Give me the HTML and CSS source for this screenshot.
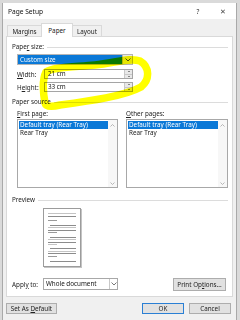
FILE: index.html
```html
<!DOCTYPE html>
<html>
<head>
<meta charset="utf-8">
<title>Page Setup</title>
<link rel="stylesheet" href="styles.css">
</head>
<body>
<div class="screen">
  <div class="dialog">
    <div class="titlebar">
      <span class="title">Page Setup</span>
      <span class="help">?</span>
      <span class="close">&#x2715;</span>
    </div>
    <div class="tabs">
      <div class="tab tab-margins">Margins</div>
      <div class="tab tab-paper active">Paper</div>
      <div class="tab tab-layout">Layout</div>
    </div>
    <div class="panel">
      <div class="group"><span class="group-label">Pape<u>r</u> size:</span><span class="rule"></span></div>
      <div class="combo">
        <span class="combo-value">Custom size</span>
        <span class="combo-btn"><svg width="6" height="4" viewBox="0 0 6 4"><polyline points="0.5,0.5 3,3 5.5,0.5" fill="none" stroke="#444" stroke-width="0.9"/></svg></span>
      </div>
      <div class="field-row">
        <span class="field-label"><u>W</u>idth:</span>
        <div class="spin">
          <span class="spin-text">21 cm</span>
          <span class="spin-btns"><span class="up"></span><span class="down"></span></span>
        </div>
      </div>
      <div class="field-row field-row-2">
        <span class="field-label">H<u>e</u>ight:</span>
        <div class="spin">
          <span class="spin-text">33 cm</span>
          <span class="spin-btns"><span class="up"></span><span class="down"></span></span>
        </div>
      </div>

      <div class="group group-source"><span class="group-label">Paper source</span><span class="rule"></span></div>
      <div class="sources">
        <div class="source-col source-left">
          <div class="list-label"><u>F</u>irst page:</div>
          <div class="listbox">
            <div class="items">
              <div class="item selected">Default tray (Rear Tray)</div>
              <div class="item">Rear Tray</div>
            </div>
            <div class="scrollbar">
              <svg width="5" height="3" viewBox="0 0 5 3"><polyline points="0.5,2.5 2.5,0.5 4.5,2.5" fill="none" stroke="#a6a6a6" stroke-width="0.8"/></svg>
              <svg width="5" height="3" viewBox="0 0 5 3"><polyline points="0.5,0.5 2.5,2.5 4.5,0.5" fill="none" stroke="#a6a6a6" stroke-width="0.8"/></svg>
            </div>
          </div>
        </div>
        <div class="source-col source-right">
          <div class="list-label"><u>O</u>ther pages:</div>
          <div class="listbox">
            <div class="items">
              <div class="item selected">Default tray (Rear Tray)</div>
              <div class="item">Rear Tray</div>
            </div>
            <div class="scrollbar">
              <svg width="5" height="3" viewBox="0 0 5 3"><polyline points="0.5,2.5 2.5,0.5 4.5,2.5" fill="none" stroke="#a6a6a6" stroke-width="0.8"/></svg>
              <svg width="5" height="3" viewBox="0 0 5 3"><polyline points="0.5,0.5 2.5,2.5 4.5,0.5" fill="none" stroke="#a6a6a6" stroke-width="0.8"/></svg>
            </div>
          </div>
        </div>
      </div>

      <div class="group group-preview"><span class="group-label">Preview</span><span class="rule"></span></div>
      <div class="thumb">
        <svg width="36" height="57" viewBox="0 0 36 57">
          <g stroke-width="1">
            <line x1="4" y1="4.5" x2="32" y2="4.5" stroke="#c4c4c4"/>
            <line x1="4" y1="7.5" x2="32" y2="7.5" stroke="#8c8c8c"/>
            <line x1="4" y1="11.5" x2="13" y2="11.5" stroke="#9a9a9a"/>
            <line x1="6" y1="16.5" x2="32" y2="16.5" stroke="#8c8c8c"/>
            <line x1="4" y1="18.5" x2="32" y2="18.5" stroke="#c4c4c4"/>
            <line x1="4" y1="21.5" x2="32" y2="21.5" stroke="#8c8c8c"/>
            <line x1="4" y1="23.5" x2="13" y2="23.5" stroke="#9a9a9a"/>
            <line x1="6" y1="28.5" x2="32" y2="28.5" stroke="#8c8c8c"/>
            <line x1="4" y1="30.5" x2="32" y2="30.5" stroke="#c4c4c4"/>
            <line x1="4" y1="33.5" x2="32" y2="33.5" stroke="#8c8c8c"/>
            <line x1="4" y1="35.5" x2="13" y2="35.5" stroke="#c4c4c4"/>
            <line x1="6" y1="39.5" x2="32" y2="39.5" stroke="#8c8c8c"/>
            <line x1="4" y1="42.5" x2="32" y2="42.5" stroke="#c4c4c4"/>
            <line x1="4" y1="44.5" x2="32" y2="44.5" stroke="#8c8c8c"/>
            <line x1="4" y1="47.5" x2="13" y2="47.5" stroke="#9a9a9a"/>
            <line x1="6" y1="52.5" x2="32" y2="52.5" stroke="#8c8c8c"/>
          </g>
        </svg>
      </div>

      <div class="apply-row">
        <span class="apply-label">Appl<u>y</u> to:</span>
        <div class="select">
          <span class="select-text">Whole document</span>
          <span class="select-btn"><svg width="6" height="4" viewBox="0 0 6 4"><polyline points="0.5,0.5 3,3 5.5,0.5" fill="none" stroke="#555" stroke-width="0.8"/></svg></span>
        </div>
        <button class="btn btn-print">Print Op<u>t</u>ions...</button>
      </div>
    </div>

    <div class="footer">
      <button class="btn btn-default">Set As <u>D</u>efault</button>
      <button class="btn btn-ok">OK</button>
      <button class="btn btn-cancel">Cancel</button>
    </div>
  </div>
</div>

<svg class="scribble" width="240" height="320" viewBox="0 0 240 320">
  <path d="M 45 103 C 43 92, 42 80, 46 72 C 52 67, 75 67, 95 65 C 115 63, 130 57, 140 61 C 150 67, 150 80, 141 87 C 125 96, 90 101, 60 105 C 52 107, 46 107, 45 103 Z" fill="none" stroke="#ffff00" stroke-width="7.5" stroke-linecap="round" stroke-linejoin="round"/>
</svg>
</body>
</html>
```

FILE: styles.css
```css
* { box-sizing: border-box; }

html, body {
  margin: 0;
  padding: 0;
}

body {
  width: 240px;
  height: 320px;
  overflow: hidden;
  position: relative;
  background: #d8d8d8;
  font-family: "Noto Sans", "Liberation Sans", sans-serif;
  font-size: 6.3px;
  color: #151515;
}

u { text-decoration: underline; text-decoration-thickness: 0.5px; text-underline-offset: 1px; }

.screen {
  display: flex;
  height: 320px;
  padding: 3px 0 0 2px;
  background: #dadada;
}

.dialog {
  width: 235px;
  height: 317px;
  background: #f0f0f0;
  border-left: 1px solid #a9a9a9;
  border-right: 1px solid #a9a9a9;
}

/* title bar */
.titlebar {
  height: 16px;
  background: #ffffff;
  display: flex;
  align-items: center;
  padding-left: 5px;
}
.title { font-size: 6.6px; color: #111; }
.help {
  margin-left: auto;
  width: 10px;
  margin-right: 13px;
  text-align: center;
  font-size: 6.5px;
  color: #333;
}
.close {
  width: 14px;
  margin-right: 6px;
  text-align: center;
  font-size: 6.5px;
  color: #444;
}

/* tabs */
.tabs {
  display: flex;
  align-items: flex-end;
  height: 13px;
  margin-top: 4px;
  padding-left: 4px;
}
.tab {
  height: 11px;
  border: 1px solid #d9d9d9;
  border-bottom: none;
  background: #f0f0f0;
  display: flex;
  align-items: center;
  justify-content: center;
  color: #222;
}
.tab-margins { width: 34px; border-right: none; }
.tab-paper { width: 32px; }
.tab-layout { width: 29px; border-left: none; }
.tab.active {
  height: 14px;
  margin-bottom: -1px;
  background: #ffffff;
  position: relative;
  z-index: 1;
  padding-bottom: 1px;
}

/* panel */
.panel {
  margin-left: 3px;
  width: 227px;
  height: 261px;
  background: #ffffff;
  border: 1px solid #d9d9d9;
  padding: 0 4px 0 5px;
}

.group {
  display: flex;
  align-items: center;
  height: 8px;
  line-height: 8px;
  margin-top: 6px;
  color: #222;
}
.group-label { white-space: nowrap; }
.rule {
  flex: 1;
  height: 1px;
  background: #dcdcdc;
  margin-left: 3px;
}

.combo {
  margin: 3px 0 0 5px;
  width: 116px;
  height: 11px;
  border: 1px solid #b5b5b5;
  display: flex;
}
.combo-value {
  flex: 1;
  background: #0a78d7;
  color: #ffffff;
  padding-left: 2px;
  line-height: 9px;
}
.combo-btn {
  width: 10px;
  background: #e6e6e6;
  border-left: 1px solid #b5b5b5;
  display: flex;
  align-items: center;
  justify-content: center;
}

.field-row {
  display: flex;
  align-items: center;
  margin-top: 4px;
  height: 10px;
}
.field-row-2 { margin-top: 3px; }
.field-label {
  width: 32px;
  padding-left: 5px;
  color: #222;
}
.spin {
  width: 89px;
  height: 10px;
  border: 1px solid #a5a5a5;
  display: flex;
}
.spin-text {
  flex: 1;
  padding-left: 3px;
  line-height: 8px;
}
.spin-btns {
  width: 8px;
  display: flex;
  flex-direction: column;
  background: #e8e8e8;
  border-left: 1px solid #c8c8c8;
}
.spin-btns span {
  flex: 1;
  display: flex;
  align-items: center;
  justify-content: center;
}
.spin-btns .up { border-bottom: 1px solid #c8c8c8; }
.spin-btns .up::before {
  content: "";
  border-left: 1.5px solid transparent;
  border-right: 1.5px solid transparent;
  border-bottom: 1.5px solid #222;
}
.spin-btns .down::before {
  content: "";
  border-left: 1.5px solid transparent;
  border-right: 1.5px solid transparent;
  border-top: 1.5px solid #222;
}

/* paper source */
.sources {
  display: flex;
  gap: 8px;
  margin-top: 4px;
  padding-left: 5px;
}
.source-left { width: 101px; }
.source-right { width: 102px; }
.list-label {
  height: 8px;
  line-height: 8px;
  color: #222;
}
.listbox {
  margin-top: 1px;
  height: 69px;
  border: 1px solid #a8a8a8;
  display: flex;
}
.items {
  flex: 1;
  padding: 1px 0 0 1px;
}
.item {
  height: 8px;
  line-height: 8px;
  padding-left: 1px;
  white-space: nowrap;
  color: #222;
}
.item.selected {
  background: #0a78d7;
  color: #ffffff;
}
.scrollbar {
  width: 9px;
  background: #f7f7f7;
  display: flex;
  flex-direction: column;
  justify-content: space-between;
  align-items: center;
  padding: 4px 0 2px;
}

/* preview */
.group-preview { margin-top: 8px; }
.thumb {
  margin: 4px 0 0 31px;
  width: 38px;
  height: 59px;
  background: #ffffff;
  border: 1px solid #9c9c9c;
  box-shadow: 1px 1px 0 #c4c4c4;
}
.thumb svg { display: block; }

/* apply row */
.apply-row {
  display: flex;
  align-items: center;
  height: 14px;
  margin-top: 10px;
  margin-right: 2px;
}
.apply-label {
  width: 31px;
  color: #222;
}
.select {
  width: 75px;
  height: 12px;
  border: 1px solid #a8a8a8;
  display: flex;
}
.select-text {
  flex: 1;
  padding-left: 2px;
  line-height: 10px;
}
.select-btn {
  width: 8px;
  border-left: 1px solid #c8c8c8;
  display: flex;
  align-items: center;
  justify-content: center;
}

.btn {
  font-family: inherit;
  font-size: 6.3px;
  color: #222;
  background: #e1e1e1;
  border: 1px solid #adadad;
  padding: 0;
  margin: 0;
  height: 11px;
  line-height: 9px;
  text-align: center;
}
.btn-print {
  margin-left: auto;
  width: 53px;
  height: 13px;
}

/* footer */
.footer {
  display: flex;
  margin-top: 6px;
  padding-left: 3px;
}
.btn-default { width: 51px; }
.btn-ok {
  margin-left: auto;
  width: 42px;
  border-color: #2a7fd4;
}
.btn-cancel {
  width: 42px;
  margin-left: 5px;
  margin-right: 5px;
}

/* highlighter mark over the size fields */
.scribble {
  position: absolute;
  left: 0;
  top: 0;
  pointer-events: none;
  mix-blend-mode: multiply;
}
```
